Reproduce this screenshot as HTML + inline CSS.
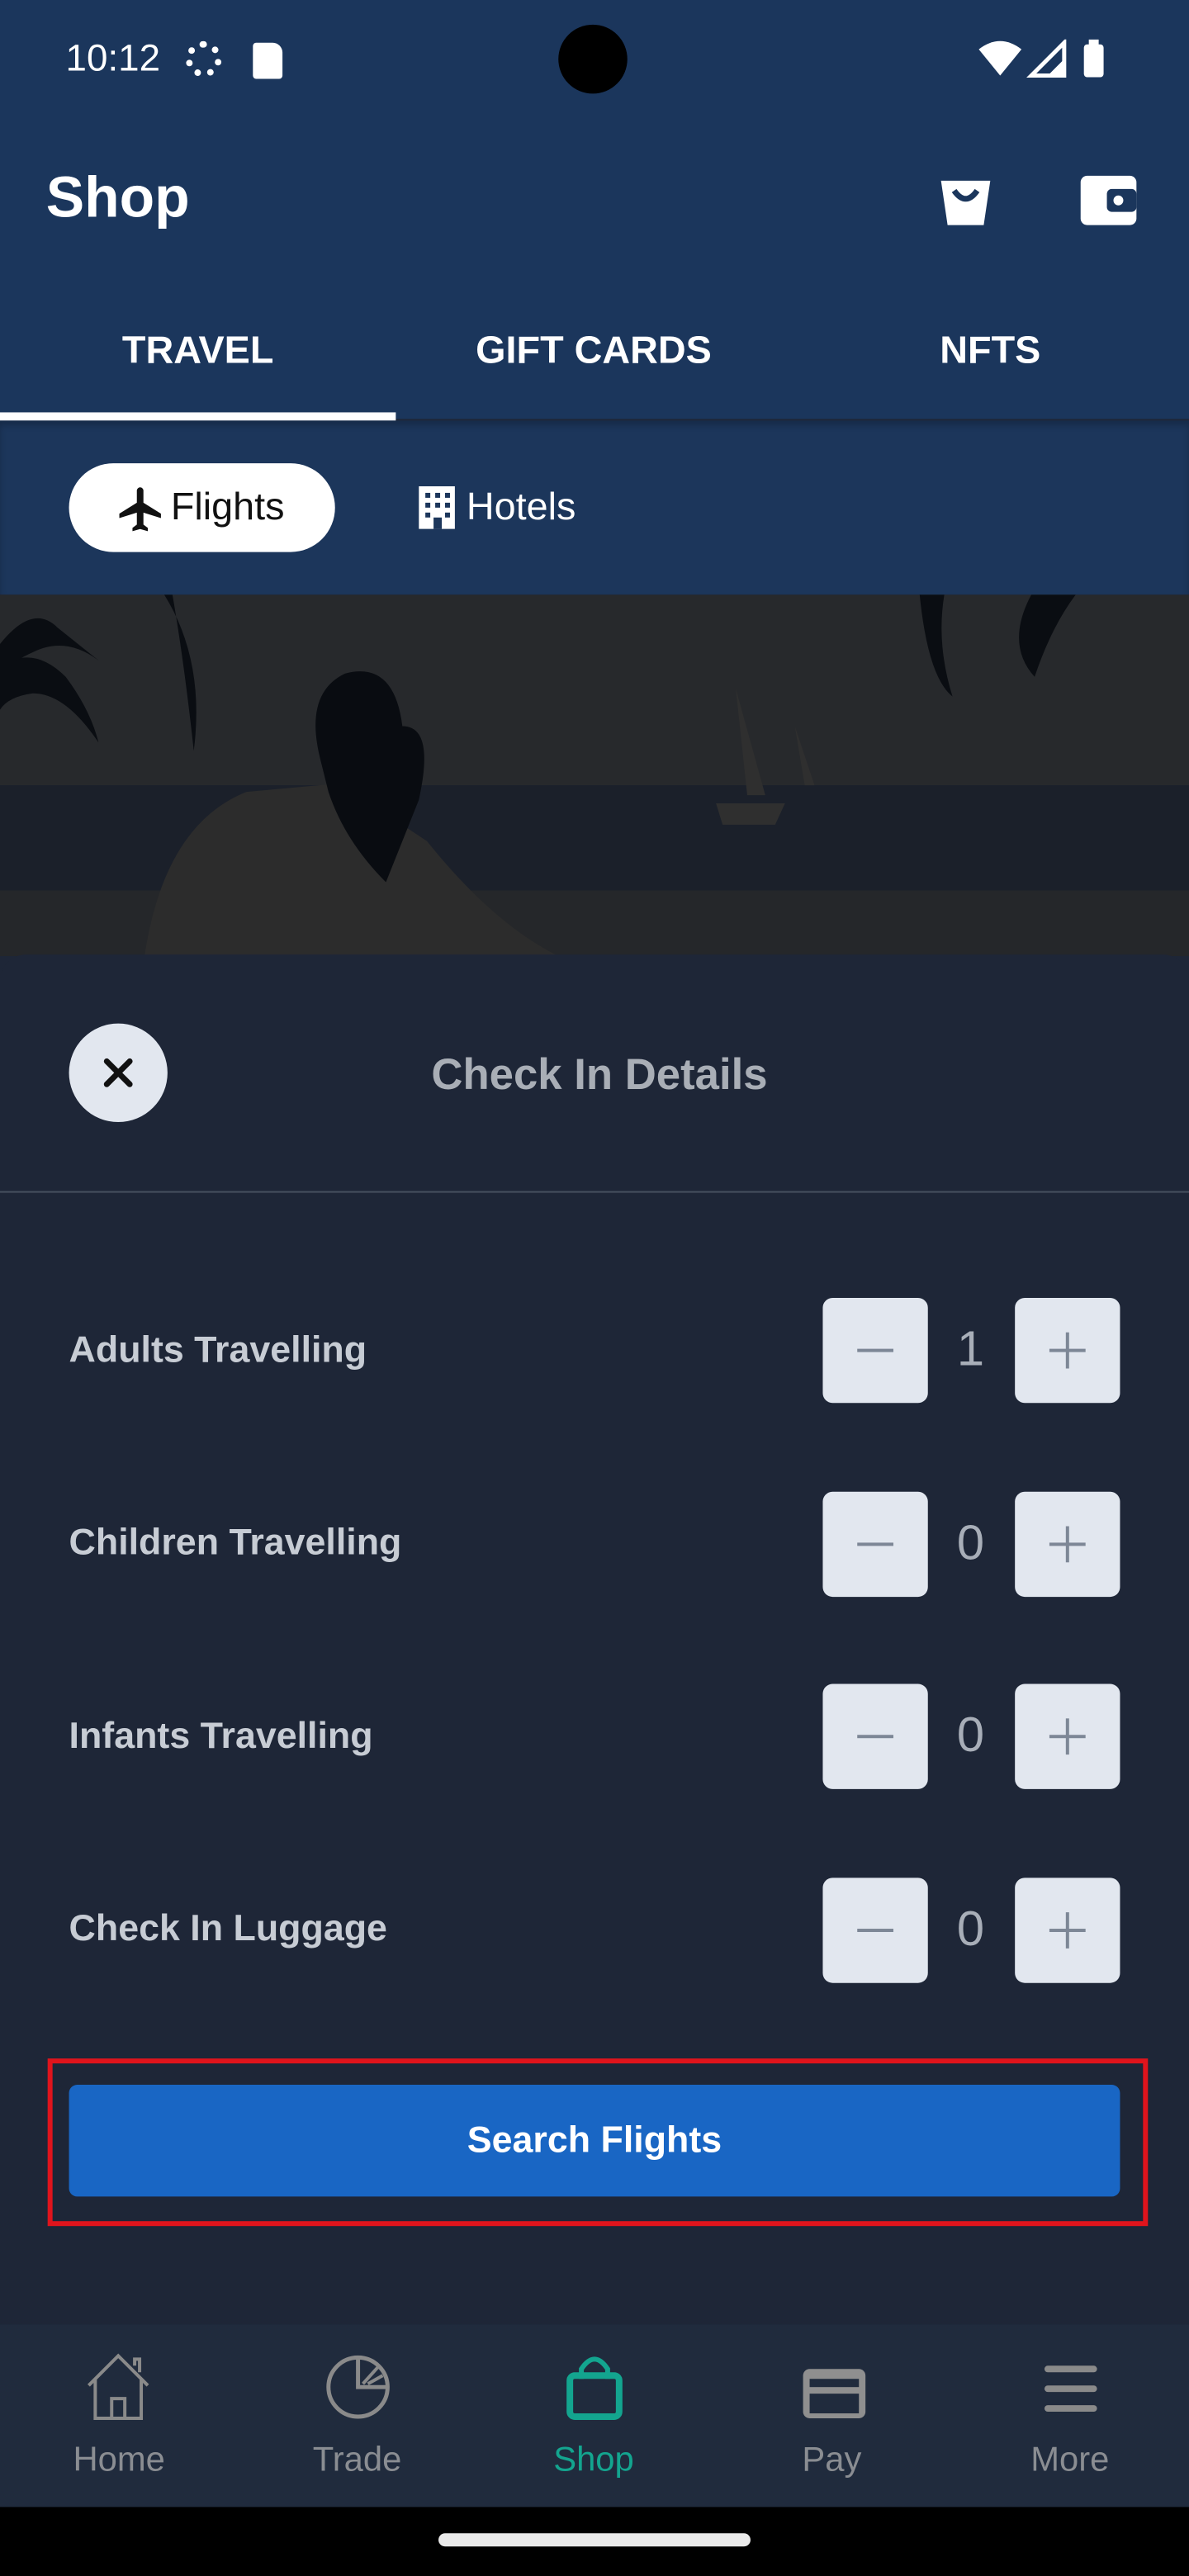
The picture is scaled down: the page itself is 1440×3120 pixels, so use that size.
<!DOCTYPE html>
<html><head><meta charset="utf-8">
<style>
*{margin:0;padding:0;box-sizing:border-box}
html,body{width:1440px;height:3120px;overflow:hidden;background:#1e2637;font-family:"Liberation Sans",Roboto,sans-serif}
#s{position:absolute;left:0;top:0;width:724px;height:1568px;transform:scale(1.98895,1.9898);transform-origin:0 0;background:#1e2637}
.a{position:absolute}
.lbl{position:absolute;left:42px;color:#c7ccd4;font-size:22.5px;font-weight:bold}
.btn{position:absolute;width:64px;height:64px;background:#e2e7ef;border-radius:6px}
.btn:before{content:"";position:absolute;left:21px;top:31px;width:22px;height:2px;background:#7d8796}
.pl:after{content:"";position:absolute;left:31px;top:21px;width:2px;height:22px;background:#7d8796}
.num{position:absolute;left:566px;width:50px;text-align:center;color:#a8aeb8;font-size:30px}
.nl{position:absolute;top:1486px;font-size:21px;color:#8a8d92;width:145px;text-align:center}
.tab{position:absolute;top:200px;text-align:center;color:#fff;font-size:23.5px;font-weight:bold}
</style></head><body><div id="s">
<div class="a" style="left:0;top:0;width:724px;height:255px;background:#1b365c"></div>
<div class="a" style="left:40px;top:22px;color:#fff;font-size:23px">10:12</div>
<div class="a" style="left:113px;top:25px;width:22px;height:22px;border:4px dotted #fff;border-radius:50%"></div>
<div class="a" style="left:154px;top:26px;width:18px;height:22px;background:#fff;border-radius:2px 6px 2px 2px"></div>
<div class="a" style="left:340px;top:15px;width:42px;height:42px;background:#000;border-radius:50%"></div>
<svg class="a" style="left:596px;top:24px" width="84" height="24"><path d="M0 6 Q13 -4 26 6 L13 22Z" fill="#fff"/><path d="M52 2 L52 22 L32 22Z" fill="none" stroke="#fff" stroke-width="2.5"/><path d="M52 12 L52 22 L42 22Z" fill="#fff"/><rect x="64" y="3" width="12" height="20" rx="2" fill="#fff"/><rect x="67" y="0" width="6" height="4" fill="#fff"/></svg>
<div class="a" style="left:28px;top:101px;color:#fff;font-size:35px;font-weight:bold">Shop</div>
<svg class="a" style="left:570px;top:102px" width="36" height="38"><path d="M3 8 H33 L29 35 H7Z" fill="#fff"/><path d="M11 14 Q18 24 25 14" stroke="#1b365c" stroke-width="3.5" fill="none"/></svg>
<svg class="a" style="left:657px;top:104px" width="36" height="34"><rect x="1" y="3" width="34" height="30" rx="4" fill="#fff"/><rect x="17" y="11" width="18" height="14" rx="3" fill="#1b365c"/><circle cx="24" cy="18" r="3" fill="#fff"/></svg>
<div class="tab" style="left:0;width:241px">TRAVEL</div>
<div class="tab" style="left:241px;width:241px">GIFT CARDS</div>
<div class="tab" style="left:482px;width:242px">NFTS</div>
<div class="a" style="left:0;top:251px;width:241px;height:5px;background:#fff"></div>
<div class="a" style="left:0;top:256px;width:724px;height:106px;background:#1c365b;box-shadow:inset 0 3px 4px rgba(0,0,0,.2)"></div>
<div class="a" style="left:42px;top:282px;width:162px;height:54px;background:#fff;border-radius:27px"></div>
<svg class="a" style="left:70px;top:294px" width="32" height="32" viewBox="0 0 24 24"><path d="M21 16v-2l-8-5V3.5a1.5 1.5 0 0 0-3 0V9l-8 5v2l8-2.5V19l-2 1.5V22l3.5-1 3.5 1v-1.5L13 19v-5.5z" fill="#111"/></svg>
<div class="a" style="left:104px;top:295px;font-size:23.5px;color:#111">Flights</div>
<svg class="a" style="left:255px;top:296px" width="22" height="26"><rect x="0" y="0" width="22" height="26" fill="#fff"/><g fill="#1c365b"><rect x="4" y="4" width="3" height="3"/><rect x="10" y="4" width="3" height="3"/><rect x="16" y="4" width="3" height="3"/><rect x="4" y="10" width="3" height="3"/><rect x="10" y="10" width="3" height="3"/><rect x="16" y="10" width="3" height="3"/><rect x="4" y="16" width="3" height="3"/><rect x="16" y="16" width="3" height="3"/><rect x="9" y="19" width="5" height="7"/></g></svg>
<div class="a" style="left:284px;top:295px;font-size:23.5px;color:#fff">Hotels</div>
<div class="a" style="left:0;top:362px;width:724px;height:116px;background:#27292c"></div>
<div class="a" style="left:0;top:478px;width:724px;height:64px;background:#1b202a"></div>
<div class="a" style="left:0;top:542px;width:724px;height:40px;background:#25272a"></div>
<svg class="a" style="left:0;top:362px" width="724" height="220">
<path d="M0 44 Q20 30 40 50 Q55 70 60 90 Q40 60 20 60 Q5 62 0 70Z" fill="#0a0d12"/>
<path d="M0 30 Q20 5 35 20 L60 40 Q40 25 20 35 Q8 40 0 50Z" fill="#0a0d12"/>
<path d="M100 0 Q125 40 118 95 Q112 40 105 0Z" fill="#0a0d12"/>
<path d="M560 0 Q565 50 580 62 Q570 30 575 0Z M628 0 Q612 30 630 50 Q640 20 655 0Z" fill="#0a0d12"/>
<path d="M88 220 Q100 140 150 120 L205 115 Q230 130 260 150 Q300 200 340 220Z" fill="#2c2c2c"/>
<path d="M195 100 Q185 60 210 48 Q240 40 245 80 Q265 80 255 125 L235 175 Q210 150 200 120Z" fill="#090c11"/>
<path d="M448 57 L455 122 L466 122Z M484 80 L490 116 L496 116Z" fill="#2f2f2f"/>
<path d="M436 127 L478 127 L472 140 L440 140Z" fill="#2f2f2f"/>
</svg>
<div class="a" style="left:0;top:581px;width:724px;height:834px;background:#1e2637;border-radius:16px 16px 0 0"></div>
<div class="a" style="left:42px;top:623px;width:60px;height:60px;background:#e2e7ef;border-radius:50%"></div>
<svg class="a" style="left:62px;top:643px" width="20" height="20"><path d="M3 3L17 17M17 3L3 17" stroke="#111" stroke-width="3.5" stroke-linecap="round"/></svg>
<div class="a" style="left:0;top:639px;width:730px;text-align:center;color:#a9aeb6;font-size:26.5px;font-weight:bold">Check In Details</div>
<div class="a" style="left:0;top:725px;width:724px;height:1px;background:#46505f"></div>
<div class="lbl" style="top:809px">Adults Travelling</div>
<div class="btn" style="left:501px;top:790px"></div><div class="num" style="top:805px">1</div><div class="btn pl" style="left:618px;top:790px"></div>
<div class="lbl" style="top:926px">Children Travelling</div>
<div class="btn" style="left:501px;top:908px"></div><div class="num" style="top:923px">0</div><div class="btn pl" style="left:618px;top:908px"></div>
<div class="lbl" style="top:1044px">Infants Travelling</div>
<div class="btn" style="left:501px;top:1025px"></div><div class="num" style="top:1040px">0</div><div class="btn pl" style="left:618px;top:1025px"></div>
<div class="lbl" style="top:1161px">Check In Luggage</div>
<div class="btn" style="left:501px;top:1143px"></div><div class="num" style="top:1158px">0</div><div class="btn pl" style="left:618px;top:1143px"></div>
<div class="a" style="left:29px;top:1253px;width:670px;height:102px;border:3px solid #e0141c"></div>
<div class="a" style="left:42px;top:1269px;width:640px;height:68px;background:#1966c4;border-radius:5px;color:#fff;font-size:22.5px;font-weight:bold;text-align:center;line-height:68px">Search Flights</div>
<div class="a" style="left:0;top:1415px;width:724px;height:111px;background:#202b3d"></div>
<svg class="a" style="left:50px;top:1432px" width="44" height="42"><path d="M4 20 L22 2 L40 20 M8 16 V40 H36 V16 M18 40 V28 H26 V40 M32 8 V4 H35 V12" stroke="#8a8a8a" stroke-width="2" fill="none"/></svg>
<svg class="a" style="left:197px;top:1432px" width="42" height="42"><circle cx="21" cy="21" r="18" stroke="#8a8a8a" stroke-width="2.5" fill="none"/><path d="M21 3 V21 H39" stroke="#8a8a8a" stroke-width="2.5" fill="none"/><path d="M24 19 L33 9 M27 19 L36 14" stroke="#8a8a8a" stroke-width="2"/></svg>
<svg class="a" style="left:344px;top:1432px" width="36" height="42"><path d="M10 16 V10 Q18 -2 26 10 V16" stroke="#13a58f" stroke-width="3" fill="none"/><rect x="3" y="14" width="30" height="25" rx="3" stroke="#13a58f" stroke-width="4" fill="none"/></svg>
<svg class="a" style="left:487px;top:1440px" width="42" height="34"><rect x="2" y="2" width="38" height="30" rx="4" fill="#8f8f8f"/><rect x="6" y="8" width="30" height="5" fill="#202b3d"/><rect x="6" y="17" width="30" height="12" fill="#202b3d"/></svg>
<svg class="a" style="left:634px;top:1438px" width="36" height="32"><g fill="#8a8a8a"><rect x="2" y="2" width="32" height="4" rx="2"/><rect x="2" y="14" width="32" height="4" rx="2"/><rect x="2" y="26" width="32" height="4" rx="2"/></g></svg>
<div class="nl" style="left:0">Home</div>
<div class="nl" style="left:145px">Trade</div>
<div class="nl" style="left:289px;color:#13a58f">Shop</div>
<div class="nl" style="left:434px">Pay</div>
<div class="nl" style="left:579px">More</div>
<div class="a" style="left:0;top:1526px;width:724px;height:42px;background:#000"></div>
<div class="a" style="left:267px;top:1542px;width:190px;height:8px;background:#eaeaea;border-radius:4px"></div>
</div></body></html>
